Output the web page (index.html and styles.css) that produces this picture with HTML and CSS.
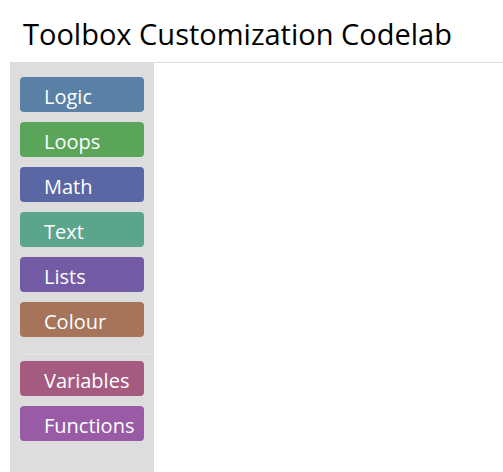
FILE: index.html
```html
<!DOCTYPE html>
<html>
<head>
<meta charset="utf-8">
<link rel="stylesheet" href="styles.css">
</head>
<body>
<header class="title">Toolbox Customization Codelab</header>
<main class="workspace">
  <nav class="toolbox">
    <div class="cat logic">Logic</div>
    <div class="cat loops">Loops</div>
    <div class="cat math">Math</div>
    <div class="cat text">Text</div>
    <div class="cat lists">Lists</div>
    <div class="cat colour">Colour</div>
    <div class="sep"></div>
    <div class="cat variables">Variables</div>
    <div class="cat functions">Functions</div>
  </nav>
  <section class="canvas"></section>
</main>
</body>
</html>
```
FILE: styles.css
```css
html, body {
  margin: 0;
  padding: 0;
  background: #fff;
  height: 100%;
  overflow: hidden;
}
body {
  display: flex;
  flex-direction: column;
  font-family: "Open Sans", "Noto Sans", sans-serif;
}
.title {
  height: 62px;
  box-sizing: border-box;
  padding: 14px 0 0 23px;
  font-size: 29px;
  line-height: 40px;
  color: #000;
  font-weight: 400;
}
.workspace {
  flex: 1;
  display: flex;
  margin-left: 10px;
}
.toolbox {
  width: 144px;
  background: #ddd;
  padding: 15px 0 0 10px;
  box-sizing: border-box;
  display: flex;
  flex-direction: column;
}
.canvas {
  flex: 1;
  border-top: 1px solid #ddd;
}
.cat {
  width: 124px;
  height: 35px;
  box-sizing: border-box;
  margin-bottom: 10px;
  border-radius: 4px;
  color: #fff;
  font-size: 20px;
  line-height: 35px;
  padding: 2px 0 0 24px;
}
.sep {
  height: 1px;
  background: #e6e6e6;
  margin: 7px 0 6px 0;
}
.logic { background: #5b80a5; }
.loops { background: #5ba55b; }
.math { background: #5b67a5; }
.text { background: #5ba58c; }
.lists { background: #745ba5; }
.colour { background: #a5745b; }
.variables { background: #a55b80; }
.functions { background: #995ba5; }
```
